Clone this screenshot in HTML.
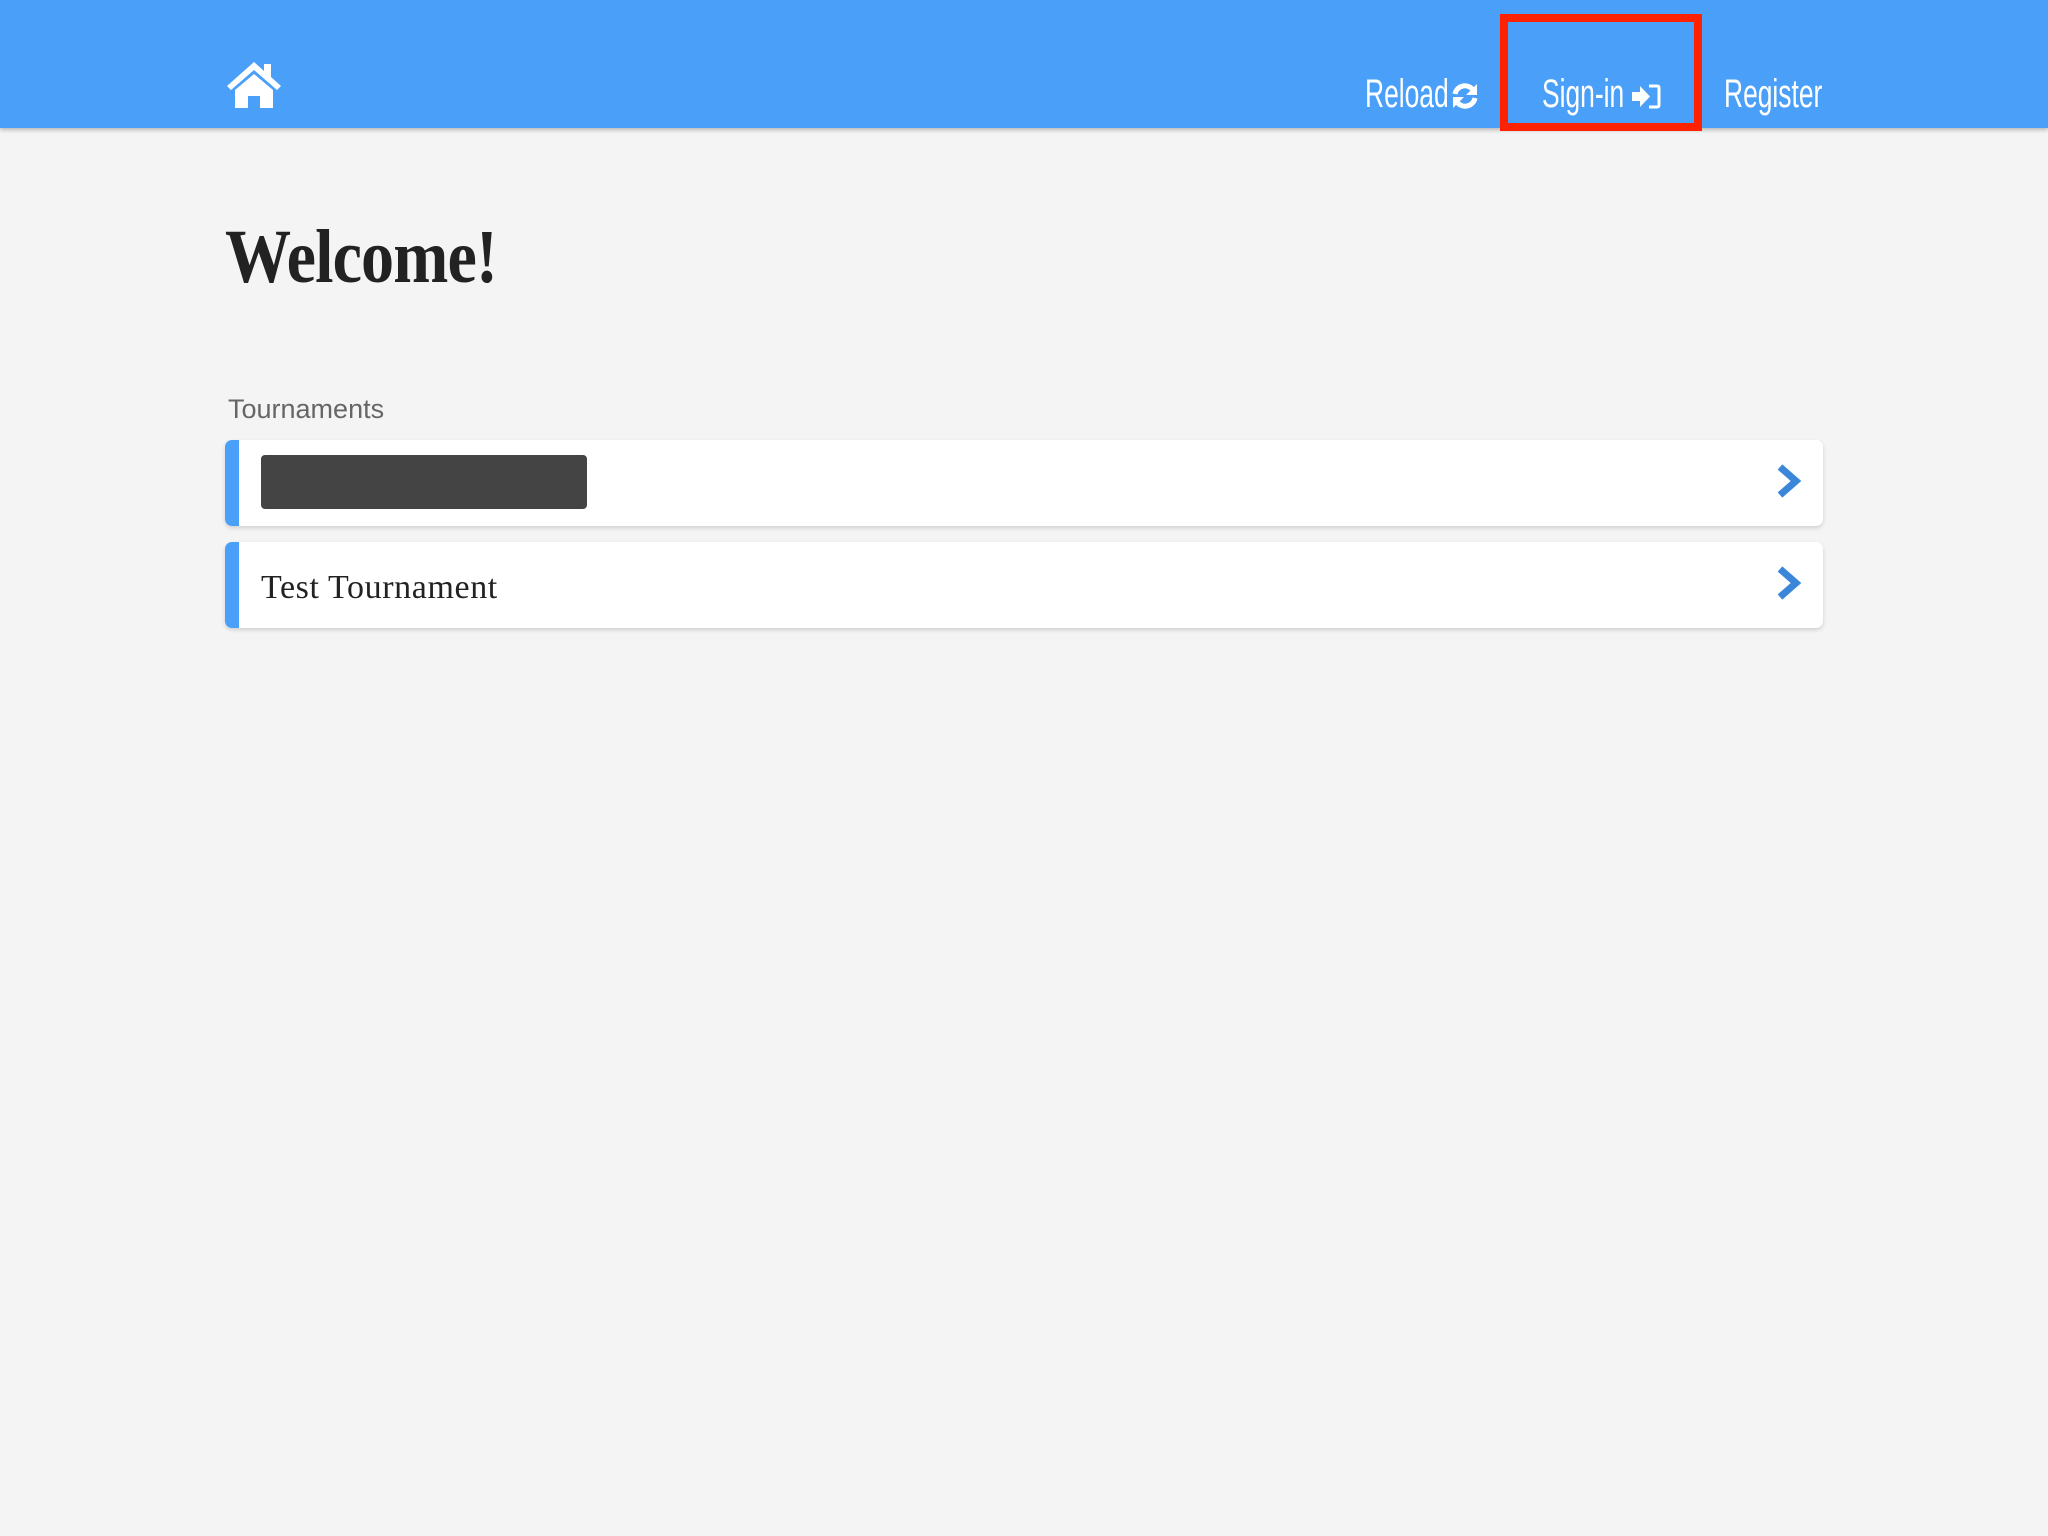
<!DOCTYPE html>
<html><head><meta charset="utf-8"><style>
body{margin:0;width:2048px;height:1536px;background:#f4f4f4;position:relative;overflow:hidden;font-family:"Liberation Sans",sans-serif}
.hdr{position:absolute;left:0;top:0;width:2048px;height:128px;background:#4aa0f8;box-shadow:0 2px 4px rgba(0,0,0,.25)}
.nav{position:absolute;top:68px;color:#fff;font-family:"Liberation Sans Narrow","Liberation Sans",sans-serif;font-size:40px;line-height:52px;transform-origin:left top;transform:scaleX(.66);white-space:nowrap}
.red{position:absolute;left:1500px;top:14px;width:186px;height:101px;border:8px solid #ff2200}
h1{position:absolute;left:225px;top:212px;margin:0;font-family:"Liberation Serif",serif;font-weight:bold;font-size:76px;line-height:90px;color:#222;letter-spacing:-1px;transform-origin:left top;transform:scaleX(.87)}
.lab{position:absolute;left:228px;top:394px;font-size:27px;color:#666}
.card{position:absolute;left:225px;width:1598px;height:86px;background:#fff;border-radius:7px;box-shadow:0 2px 4px rgba(0,0,0,.15);overflow:hidden}
.card:before{content:"";position:absolute;left:0;top:0;bottom:0;width:14px;background:#4aa0f8}
.card svg{position:absolute;left:1551px;top:23px}
.t{position:absolute;left:36px;top:27px;font-family:"Liberation Serif",serif;font-size:34px;color:#222;letter-spacing:.6px}
.red2{position:absolute;left:36px;top:15px;width:326px;height:54px;background:#444;border-radius:4px}
</style></head><body>
<div class="hdr">
<svg style="position:absolute;left:225px;top:60px" width="58" height="50" viewBox="0 0 58 50"><path d="M29 2 L2 26 L6 30 L29 10 L52 30 L56 26 L46 17 L46 4 L39 4 L39 11 Z" fill="#fff"/><path d="M10 30 L29 14 L48 30 L48 48 L35 48 L35 36 L23 36 L23 48 L10 48 Z" fill="#fff"/></svg>
<div class="nav" style="left:1365px">Reload</div>
<svg style="position:absolute;left:1451px;top:82px" width="28" height="28" viewBox="0 0 28 28"><path d="M4 12 A10 10 0 0 1 22 8" stroke="#fff" stroke-width="5" fill="none"/><path d="M26 2 L26 13 L15 13 Z" fill="#fff"/><path d="M24 16 A10 10 0 0 1 6 20" stroke="#fff" stroke-width="5" fill="none"/><path d="M2 26 L2 15 L13 15 Z" fill="#fff"/></svg>
<div class="nav" style="left:1542px">Sign-in</div>
<svg style="position:absolute;left:1631px;top:84px" width="30" height="25" viewBox="0 0 30 25"><path d="M1 8 L9 8 L9 2 L19 12.5 L9 23 L9 17 L1 17 Z" fill="#fff"/><path d="M18 2 L26 2 Q28 2 28 4 L28 21 Q28 23 26 23 L18 23" stroke="#fff" stroke-width="3" fill="none"/></svg>
<div class="nav" style="left:1724px">Register</div>
</div>
<div class="red"></div>
<h1>Welcome!</h1>
<div class="lab">Tournaments</div>
<div class="card" style="top:440px"><div class="red2"></div><svg width="26" height="36" viewBox="0 0 26 36"><path d="M4 4 L20 18 L4 32" stroke="#3a87d9" stroke-width="7" fill="none"/></svg></div>
<div class="card" style="top:542px"><div class="t">Test Tournament</div><svg width="26" height="36" viewBox="0 0 26 36"><path d="M4 4 L20 18 L4 32" stroke="#3a87d9" stroke-width="7" fill="none"/></svg></div>
</body></html>
